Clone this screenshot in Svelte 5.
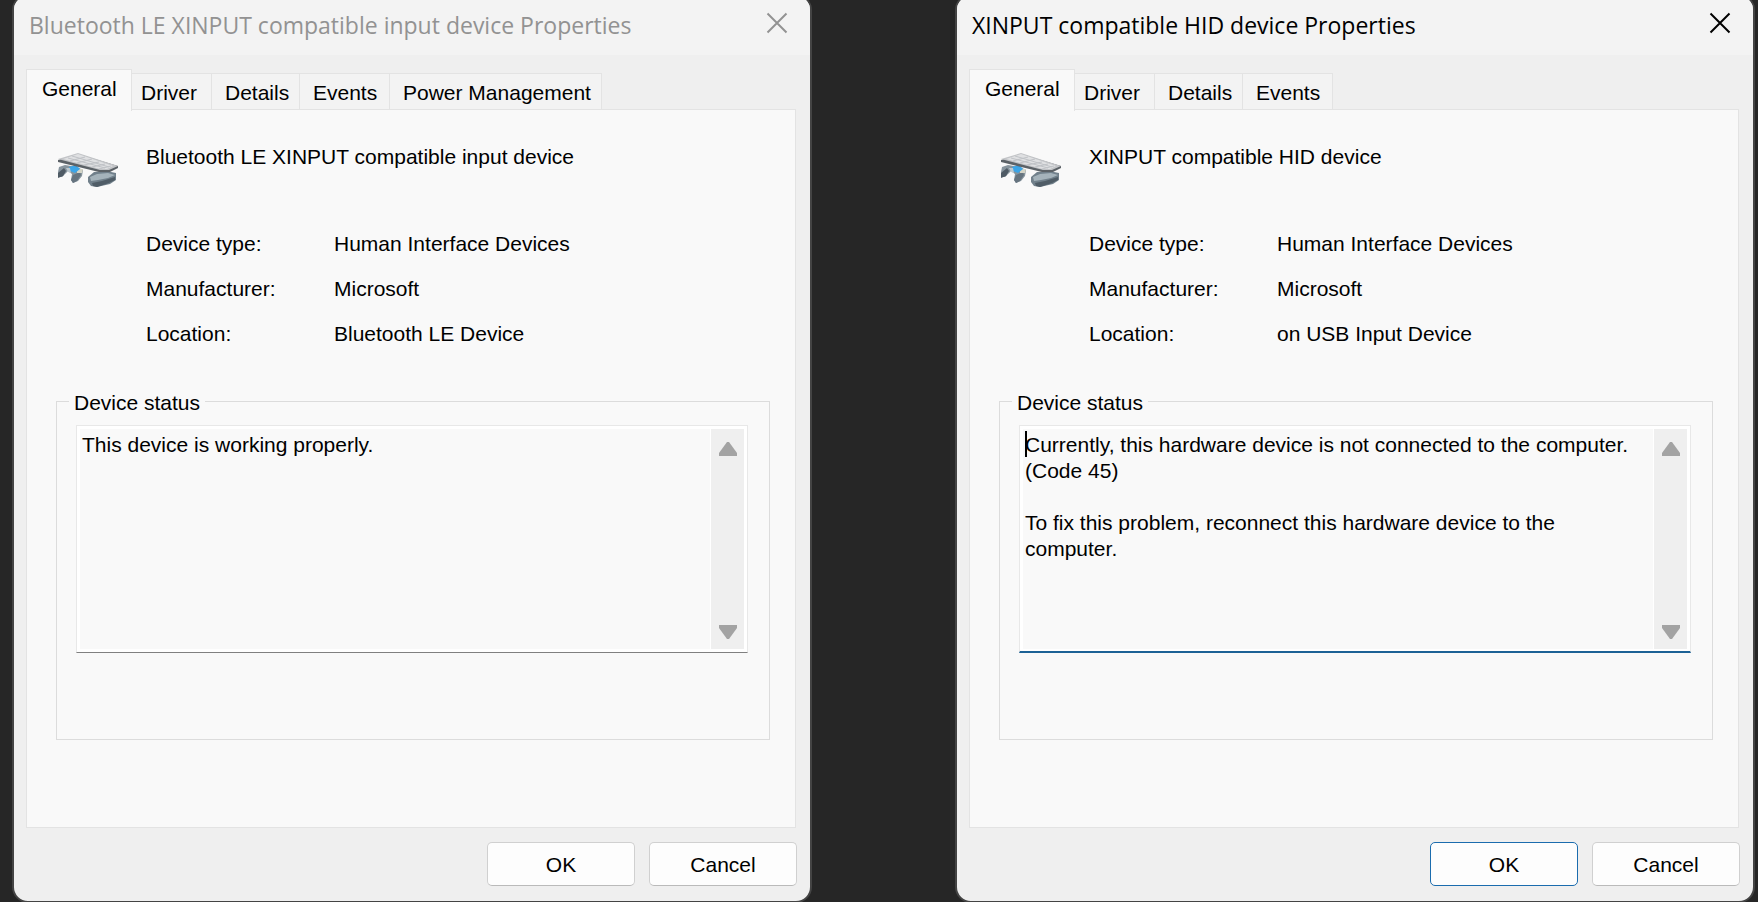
<script>
    let dialogs = $state([
        {
            id: 'bluetooth',
            active: false,
            title: 'Bluetooth LE XINPUT compatible input device Properties',
            name: 'Bluetooth LE XINPUT compatible input device',
            tabs: ['General', 'Driver', 'Details', 'Events', 'Power Management'],
            tab: 'General',
            location: 'Bluetooth LE Device',
            status: 'This device is working properly.'
        },
        {
            id: 'hid',
            active: true,
            title: 'XINPUT compatible HID device Properties',
            name: 'XINPUT compatible HID device',
            tabs: ['General', 'Driver', 'Details', 'Events'],
            tab: 'General',
            location: 'on USB Input Device',
            status: 'Currently, this hardware device is not connected to the computer. (Code 45)\n\nTo fix this problem, reconnect this hardware device to the computer.'
        }
    ]);

    const details = (dialog) => [
        ['Device type:', 'Human Interface Devices'],
        ['Manufacturer:', 'Microsoft'],
        ['Location:', dialog.location]
    ];

    const scroll = (id, amount) => {
        document.getElementById(`${id}-status`).scrollTop += amount;
    };
</script>

<main class="desktop">
    {#each dialogs as dialog (dialog.id)}
        <section class="dialog" class:active={dialog.active} aria-labelledby="{dialog.id}-title">
            <header class="titlebar">
                <h1 id="{dialog.id}-title">{dialog.title}</h1>
                <button class="close" aria-label="Close">
                    <svg viewBox="0 0 22 22" width="22" height="22">
                        <path d="M1.5 1.5 20.5 20.5M20.5 1.5 1.5 20.5" />
                    </svg>
                </button>
            </header>

            <div class="tabs" role="tablist">
                {#each dialog.tabs as tab}
                    <button
                        class="tab"
                        class:selected={dialog.tab === tab}
                        role="tab"
                        aria-selected={dialog.tab === tab}
                        onclick={() => (dialog.tab = tab)}
                    >{tab}</button>
                {/each}
            </div>

            <div class="panel" role="tabpanel">
                <div class="device">
                    <svg class="device-icon" viewBox="0 0 64 48" width="64" height="48" aria-hidden="true">
                        <!-- gamepad -->
                        <path d="M3 23 9 21 21 23 27 26 26 32 22 37 17 39 15 36 16 30 12 27 9 30 6 33 2 33 2 28z" fill="#87949d" />
                        <path d="M2 29 8 24 10 27 7 32 2 34z" fill="#4f5b65" />
                        <path d="M17 31 24 28 25 31 21 37 17 39 15 36z" fill="#66747f" />
                        <path d="M21 25 27 25 26 29 21 29z" fill="#d4d5c7" />
                        <path d="M13 23 20 21 24 25 19 29 14 27z" fill="#3ca5e7" />
                        <path d="M10 24 14 24 15 29 12 28z" fill="#bcc8cf" />
                        <!-- mouse -->
                        <path d="M32 33 38 28 50 27 60 29 60 36 54 40 41 43 35 42 32 38z" fill="#71808b" />
                        <path d="M34 33 41 30 52 29 59 31 52 34 42 36 35 37z" fill="#a5b3bb" />
                        <path d="M36 39 46 37 59 33 59 36 53 39 41 43 37 42z" fill="#505d67" />
                        <!-- keyboard -->
                        <path d="M2 16 22 10 62 22 62 24 54 28 43 28 2 18z" fill="#5c6267" />
                        <path d="M2 15 22 9 62 22 53 26 44 26z" fill="#c2c4c7" />
                        <path d="M7 15 22 10 57 22 51 25 44 25z" fill="#dfe0e2" />
                        <path d="M12 14 49 24M16 12 53 23M14 17 29 13M21 19 36 15M28 21 43 18M36 23 49 20M43 25 55 22" fill="none" stroke="#bfc2c6" stroke-width="1" />
                    </svg>
                    <span>{dialog.name}</span>
                </div>

                <dl>
                    {#each details(dialog) as [label, value]}
                        <dt>{label}</dt>
                        <dd>{value}</dd>
                    {/each}
                </dl>

                <fieldset>
                    <legend><label for="{dialog.id}-status">Device status</label></legend>
                    <div class="status">
                        <textarea id="{dialog.id}-status" readonly value={dialog.status}></textarea>
                        {#if dialog.active}
                            <span class="caret"></span>
                        {/if}
                        <div class="scrollbar">
                            <button aria-label="Scroll up" onclick={() => scroll(dialog.id, -26)}>
                                <svg viewBox="0 0 20 16" width="20" height="16">
                                    <path d="M9 1h2l8 11v3H1v-3z" />
                                </svg>
                            </button>
                            <button aria-label="Scroll down" onclick={() => scroll(dialog.id, 26)}>
                                <svg viewBox="0 0 20 16" width="20" height="16">
                                    <path d="M9 15h2l8-11V1H1v3z" />
                                </svg>
                            </button>
                        </div>
                    </div>
                </fieldset>
            </div>

            <footer>
                <button class="action" class:default={dialog.active}>OK</button>
                <button class="action">Cancel</button>
            </footer>
        </section>
    {/each}
</main>

<style>
    :global(body) {
        margin: 0;
        background: #262626;
    }

    .desktop {
        display: grid;
        grid-template-columns: 1fr 1fr;
        gap: 143px;
        box-sizing: border-box;
        height: 100vh;
        padding: 0 3px 0 12px;
        overflow: hidden;
        background: #262626;
        color: #000;
        font: 21px/26px "Liberation Sans", Arial, sans-serif;
    }

    /* Dialogs run slightly past the top and bottom of the screen */
    .dialog {
        display: flex;
        flex-direction: column;
        box-sizing: border-box;
        min-height: calc(100vh + 7px);
        margin-top: -6px;
        border: 2px solid #444;
        border-radius: 16px;
        background: #efefef;
        overflow: hidden;
    }

    button {
        margin: 0;
        padding: 0;
        border: 0;
        background: none;
        color: inherit;
        font: inherit;
    }

    .titlebar {
        display: flex;
        flex-shrink: 0;
        align-items: center;
        justify-content: space-between;
        box-sizing: border-box;
        height: 59px;
        padding: 0 22px 2px 15px;
        background: #f3f3f3;
        color: #929292;
    }

    .active .titlebar {
        color: #000;
    }

    h1 {
        margin: 0;
        font: 23px/32px "Open Sans", "Noto Sans", sans-serif;
        white-space: nowrap;
    }

    .close {
        display: flex;
        margin-bottom: 4px;
    }

    .close svg {
        fill: none;
        stroke: currentColor;
        stroke-width: 2;
    }

    .tabs {
        display: grid;
        flex-shrink: 0;
        grid-template-columns: 102px 84px 88px 90px 212px;
        align-items: end;
        height: 40px;
        padding: 14px 14px 0 12px;
    }

    .tab {
        box-sizing: border-box;
        height: 36px;
        padding: 2px 0 0 13px;
        border: 1px solid #e3e3e3;
        border-width: 1px 1px 0 0;
        background: #f3f3f3;
        text-align: left;
        white-space: nowrap;
    }

    .tab.selected {
        z-index: 1;
        height: 42px;
        margin: 0 -4px -2px 0;
        padding: 0 0 4px 15px;
        border-left-width: 1px;
        background: #f9f9f9;
    }

    .panel {
        flex: 1;
        margin: 0 14px 0 12px;
        padding: 34px 25px 40px 29px;
        border: 1px solid #e3e3e3;
        background: #f9f9f9;
    }

    .device {
        display: flex;
        gap: 26px;
    }

    dl {
        display: grid;
        grid-template-columns: 188px 1fr;
        row-gap: 19px;
        margin: 39px 0 39px 90px;
    }

    dd {
        margin: 0;
    }

    fieldset {
        min-width: 0;
        margin: 0;
        padding: 9px 21px 86px 19px;
        border: 1px solid #dcdcdc;
    }

    legend {
        margin-left: -7px;
        padding: 4px 5px 0;
    }

    .status {
        position: relative;
        display: flex;
        gap: 1px;
        box-sizing: border-box;
        height: 228px;
        padding: 3px;
        border: 1px solid #e8e8e8;
        border-bottom-color: #808080;
        background: #fff;
    }

    .active .status {
        padding-bottom: 2px;
        border-bottom: 2px solid #1d6296;
    }

    textarea {
        flex: 1;
        min-width: 0;
        margin: 0;
        padding: 3px 8px 0 2px;
        border: 0;
        outline: 0;
        background: #f9f9f9;
        color: inherit;
        font: inherit;
        resize: none;
        overflow: hidden;
    }

    .caret {
        position: absolute;
        top: 5px;
        left: 5px;
        width: 2px;
        height: 26px;
        background: #000;
    }

    .scrollbar {
        display: flex;
        flex-direction: column;
        justify-content: space-between;
        width: 33px;
        background: #efefef;
    }

    .scrollbar button {
        display: flex;
        align-items: center;
        justify-content: center;
        height: 40px;
    }

    .scrollbar button:last-child {
        height: 34px;
    }

    .scrollbar svg {
        fill: #a3a3a3;
    }

    footer {
        display: flex;
        justify-content: flex-end;
        gap: 14px;
        padding: 14px 13px 15px;
    }

    .action {
        box-sizing: border-box;
        width: 148px;
        height: 44px;
        padding-top: 2px;
        border: 1px solid #d0d0d0;
        border-bottom-color: #bababa;
        border-radius: 5px;
        background: #fdfdfd;
    }

    .action.default {
        border-color: #1b6cae;
    }
</style>
